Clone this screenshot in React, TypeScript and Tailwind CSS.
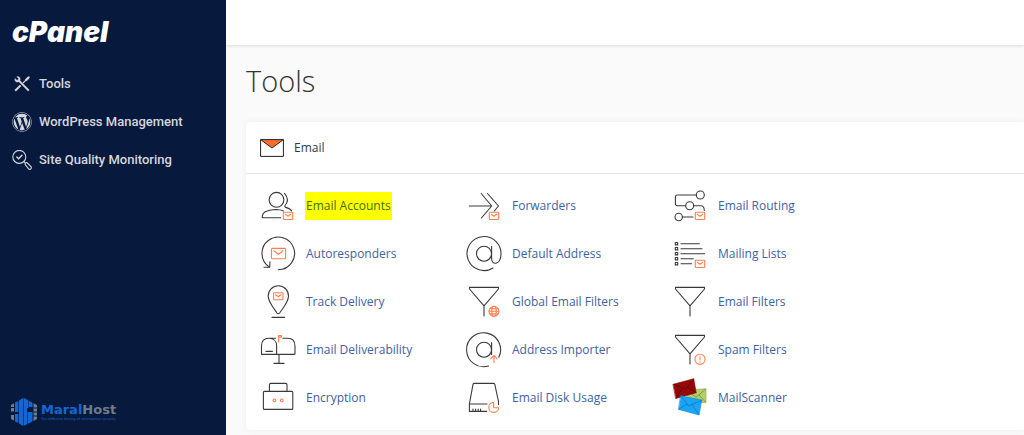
import React from "react";
import { FaWordpress } from "react-icons/fa";

const ORANGE = "#ff7f50";

const Icon = ({ children }: { children: React.ReactNode }) => (
  <svg
    viewBox="0 0 36 36"
    className="size-9 shrink-0 overflow-visible"
    fill="none"
    stroke="#3a3a3a"
    strokeWidth="1.1"
    strokeLinecap="round"
    strokeLinejoin="round"
    aria-hidden="true"
  >
    {children}
  </svg>
);

const MailBadge = () => (
  <g stroke={ORANGE}>
    <rect x="23.3" y="24.3" width="9.4" height="7.2" rx="0.8" />
    <path d="M25.3 26.3L28 28.3L30.7 26.3" />
  </g>
);

const Funnel = () => <path d="M3.5 3.4H32.5V5L18 21.8L3.5 5ZM18 22V32" />;

const AccountsIcon = () => (
  <Icon>
    <circle cx="16.5" cy="11.8" r="7.4" />
    <path d="M20.7 29.7H2.2C2.2 24.5 5.5 22 16.5 21.5Q20.5 21.5 23.5 23" />
    <path d="M24.5 5.3C28.3 9.5 28.3 14 24.7 18L25.5 19.4C29 20.4 31 21.5 31.6 23" />
    <MailBadge />
  </Icon>
);

const ForwardersIcon = () => (
  <Icon>
    <path d="M3.4 18H25M15.2 5.5L25.7 18L15.4 30M21.5 5.5L32.5 18L28.3 23" />
    <MailBadge />
  </Icon>
);

const RoutingIcon = () => (
  <Icon>
    <circle cx="28.3" cy="7" r="4" />
    <circle cx="17.7" cy="17.7" r="4" />
    <circle cx="6.7" cy="29" r="3.7" />
    <path d="M24.3 7H5.5Q3.4 7 3.4 9V15.5Q3.4 17.7 5.5 17.7H13.7M21.7 17.7H29Q32.3 18 32.3 22.5M10.4 29H21" />
    <MailBadge />
  </Icon>
);

const AutoIcon = () => (
  <Icon>
    <path d="M9.3 31A16.3 16.3 0 1 1 18.3 33.7" />
    <path d="M10 25.7L9.7 31.3L4 31.3" />
    <g stroke={ORANGE}>
      <rect x="11.4" y="12.4" width="14.2" height="10.4" rx="1" />
      <path d="M14 14.8L18.5 18.2L23 14.8" />
    </g>
  </Icon>
);

const AddressIcon = () => (
  <Icon>
    <circle cx="18" cy="17.7" r="7.5" />
    <path d="M25.6 10.5V22.5C25.6 29.5 34 29 34.9 19.5A17 17 0 1 0 27 32" />
  </Icon>
);

const ListsIcon = () => (
  <Icon>
    {[7.7, 12.7, 17.7, 22.7, 27.7].map((y) => (
      <rect key={y} x="3.3" y={y - 1.2} width="2.4" height="2.4" />
    ))}
    <path d="M9 7.7H27.3M9 12.7H30M9 17.7H32.6M9 22.7H21.3M9 27.7H19.7" />
    <MailBadge />
  </Icon>
);

const TrackIcon = () => (
  <Icon>
    <path d="M18.3 1.8C12.5 1.8 8.2 6.3 8.2 12C8.2 18 13.5 23.5 16.8 28.8Q18.3 30.6 19.8 28.8C23.2 23.5 28.5 18 28.5 12C28.5 6.3 24.1 1.8 18.3 1.8ZM12 33.4H24.6" />
    <g stroke={ORANGE}>
      <rect x="13.6" y="8.8" width="9.4" height="7" rx="0.8" />
      <path d="M15.6 10.8L18.3 12.8L21 10.8" />
    </g>
  </Icon>
);

const GlobalFiltersIcon = () => (
  <Icon>
    <Funnel />
    <g stroke={ORANGE}>
      <circle cx="28" cy="27.3" r="5" />
      <ellipse cx="28" cy="27.3" rx="2.2" ry="5" />
      <path d="M23 27.3H33M24 24.7H32M24 29.9H32" />
    </g>
  </Icon>
);

const FiltersIcon = () => (
  <Icon>
    <Funnel />
  </Icon>
);

const DeliverabilityIcon = () => (
  <Icon>
    <path d="M1.5 22.4V14C1.5 9 4.5 6.3 9 6.3S16.6 9 16.6 14V22.4ZM9 6.3H15.5M22.8 6.3H27.5C32.5 6.3 35 9.5 35 14V21.4Q35 22.4 34 22.4H16.6M19 22.4V31.4M14 31.4H24M6 19.4H12.4" />
    <path stroke={ORANGE} d="M18.6 9.8V3.6H21.4V5.2H19.4" />
  </Icon>
);

const ImporterIcon = () => (
  <Icon>
    <circle cx="18" cy="17.7" r="7.5" />
    <path d="M25.6 10.5V22.5M32.8 25.3A17 17 0 1 0 22.5 34" />
    <path stroke={ORANGE} d="M28 30.8V23.6M24.8 26.8L28 23.4L31.2 26.8" />
  </Icon>
);

const SpamIcon = () => (
  <Icon>
    <Funnel />
    <circle cx="28" cy="27.3" r="5.1" stroke={ORANGE} />
    <path stroke={ORANGE} d="M28 24.7V28M28 29.8V30" />
  </Icon>
);

const EncryptionIcon = () => (
  <Icon>
    <rect x="3.4" y="11.4" width="29.4" height="18" rx="1" />
    <path d="M9.4 11V4.8Q9.4 3.4 10.8 3.4H25.5Q27 3.4 27 4.8V11" />
    <circle cx="14.4" cy="20.4" r="1.4" stroke={ORANGE} />
    <circle cx="21.8" cy="20.4" r="1.4" stroke={ORANGE} />
  </Icon>
);

const DiskIcon = () => (
  <Icon>
    <path d="M20.7 31.4H3.4V24L7 4.4Q7.3 3.4 8.3 3.4H27.5Q28.5 3.4 28.8 4.4L32.5 21.5V24.5M3.4 24H21M7 29V31M9.6 29V31M12.2 29V31M14.6 29V31" />
    <path stroke={ORANGE} d="M27.6 22.4A5 5 0 1 0 32.8 27.8H27.6Z" />
  </Icon>
);

const ScannerIcon = () => (
  <Icon>
    <g strokeWidth="0.6">
      <path d="M14 10L34 8.8V22.4L17 22.6Z" fill="#b6cf6b" stroke="#8ea84a" />
      <path d="M17 12L24 17.3L33.5 9.2M33.5 22L27 15" stroke="#3f7d22" />
      <path d="M1.3 4.3L21.7 -1.3L24.2 12.8L4 18.4Z" fill="#970808" stroke="#7a0000" />
      <path d="M1.5 4.5L14 9L21.5 -1M4.2 18L10.5 8M24 12.5L15.5 7.5" stroke="#5a0000" />
      <path d="M9 15.8L29.8 20L27 35L6.7 29.4Z" fill="#1ba5f5" stroke="#0f86cf" />
      <path d="M9 16L16.5 26L29.6 20.3M7 29L15 24M27 34.6L20 24.6" stroke="#0b67a5" />
    </g>
  </Icon>
);

const tools = [
  { name: "Email Accounts", icon: AccountsIcon, highlighted: true },
  { name: "Forwarders", icon: ForwardersIcon },
  { name: "Email Routing", icon: RoutingIcon },
  { name: "Autoresponders", icon: AutoIcon },
  { name: "Default Address", icon: AddressIcon },
  { name: "Mailing Lists", icon: ListsIcon },
  { name: "Track Delivery", icon: TrackIcon },
  { name: "Global Email Filters", icon: GlobalFiltersIcon },
  { name: "Email Filters", icon: FiltersIcon },
  { name: "Email Deliverability", icon: DeliverabilityIcon },
  { name: "Address Importer", icon: ImporterIcon },
  { name: "Spam Filters", icon: SpamIcon },
  { name: "Encryption", icon: EncryptionIcon },
  { name: "Email Disk Usage", icon: DiskIcon },
  { name: "MailScanner", icon: ScannerIcon },
];

const ToolsGlyph = () => (
  <svg viewBox="0 0 20 20" className="size-5" fill="none" stroke="currentColor" aria-hidden="true">
    <path d="M6.6 6.4L16.8 16.6" strokeWidth="2" />
    <path d="M3 4.4L5 6.4L6.8 4.8L4.8 2.8C7 2 8.8 4 8 6.4L6.4 8C4 8.6 2.2 6.6 3 4.4Z" fill="currentColor" strokeWidth="0.4" />
    <path d="M3.2 16.8L8.6 11.4" strokeWidth="2" />
    <path d="M11 9L14.2 5.8" strokeWidth="1.2" />
    <path d="M13.4 5.6L15.6 3.2L17.2 2.8L16.8 4.6L14.6 6.6Z" fill="currentColor" />
  </svg>
);

const QualityGlyph = () => (
  <svg
    viewBox="0 0 20 20"
    className="size-5"
    fill="none"
    stroke="currentColor"
    strokeWidth="1.1"
    strokeLinecap="round"
    aria-hidden="true"
  >
    <circle cx="7.3" cy="6.9" r="6.5" />
    <path d="M4.8 7L6.6 8.8L10 5.2" strokeWidth="1.4" />
    <path d="M11.8 11.6L13.4 13.2M13.2 14.6C12.8 13.2 14 12.2 15.2 12.8L19 16.6C20 18.4 18.4 20 16.8 19Z" />
  </svg>
);

const navItems = [
  { label: "Tools", icon: <ToolsGlyph /> },
  { label: "WordPress Management", icon: <FaWordpress size={20} /> },
  { label: "Site Quality Monitoring", icon: <QualityGlyph /> },
];

const HostLogo = () => (
  <svg viewBox="0 0 28 30" className="h-[30px] w-7" aria-hidden="true">
    <path d="M9 3.5L13 1V29L9 26.5ZM13.6 0.8L18.5 3.5V11H17V27.3L13.6 29Z" fill="#1267d6" />
    <path d="M5 5.5L8.4 4V15H5ZM5 17H8.4V26L5 24.5ZM19 4L22.5 5.5V10H19ZM17.6 15H22.5V24.5L17.6 27Z" fill="#1267d6" />
    <path d="M1 8L4 6.2V10H1ZM1 11H4V14.5H1ZM1 18H4V23.5L1 22ZM23.5 6.2L27 8V10.5H23.5ZM23.5 11.5H27V14.5H23.5ZM23.5 15.5H27V18.5H23.5ZM23.5 19.5H27V22L23.5 24Z" fill="#6f7c8f" />
  </svg>
);

const App: React.FC = () => {
  return (
    <div className="flex h-screen overflow-hidden bg-[#fafafa] font-['Open_Sans',sans-serif]">
      <aside className="flex w-[226px] shrink-0 flex-col bg-[#071a3e] font-['Roboto',sans-serif] text-[#d5d7dc]">
        <a
          href="#"
          className="px-3 pt-4 font-['Inter',sans-serif] text-[28px] leading-8 font-black text-white italic"
        >
          cPanel
        </a>
        <nav className="mt-[17px] flex flex-col">
          {navItems.map((item) => (
            <a
              key={item.label}
              href="#"
              className="flex h-[38px] items-center gap-[7px] px-3 text-[13px] font-medium"
            >
              {item.icon}
              {item.label}
            </a>
          ))}
        </nav>
        <div className="mt-auto flex items-center gap-[3px] px-[10px] pb-2">
          <HostLogo />
          <div className="font-['DejaVu_Sans',sans-serif] whitespace-nowrap">
            <p className="text-[13px] leading-[14px] font-bold text-[#1267d6]">
              Maral<span className="text-[#6f7c8f]">Host</span>
            </p>
            <p className="text-[3px] leading-[5px] font-bold text-[#15509f]">
              The different feeling of information security
            </p>
          </div>
        </div>
      </aside>

      <div className="flex min-w-0 flex-1 flex-col">
        <header className="h-[45px] shrink-0 bg-white shadow-[0_1px_3px_rgba(0,0,0,0.12)]" />
        <main className="pt-4 pl-5">
          <h1 className="text-[29px] leading-10 font-light text-[#333333]">
            Tools
          </h1>
          <section className="mt-[21px] rounded-l bg-white shadow-[0_0_6px_rgba(0,0,0,0.06)]">
            <h2 className="flex h-[52px] items-center gap-[10px] border-b border-[#e6e7ee] px-[14px] text-xs text-[#293a4a]">
              <svg viewBox="0 0 24 18" className="h-[18px] w-6" aria-hidden="true">
                <path d="M1 1H23L12 9Z" fill="#ff6c2c" />
                <path
                  d="M0.6 0.6H23.4V17.4H0.6ZM0.6 0.6L12 9L23.4 0.6"
                  fill="none"
                  stroke="#222222"
                />
              </svg>
              Email
            </h2>
            <ul className="grid grid-cols-[repeat(auto-fill,206px)] py-2 pl-[14px]">
              {tools.map(({ name, icon: ToolIcon, highlighted }) => (
                <li key={name}>
                  <a
                    href="#"
                    className="flex h-12 items-center gap-[9px] text-xs text-[#4062a5]"
                  >
                    <ToolIcon />
                    <span
                      className={
                        highlighted
                          ? "bg-[#ffff00] px-px leading-7 text-[#40700f]"
                          : "px-px leading-7"
                      }
                    >
                      {name}
                    </span>
                  </a>
                </li>
              ))}
            </ul>
          </section>
        </main>
      </div>
    </div>
  );
};

export default App;
